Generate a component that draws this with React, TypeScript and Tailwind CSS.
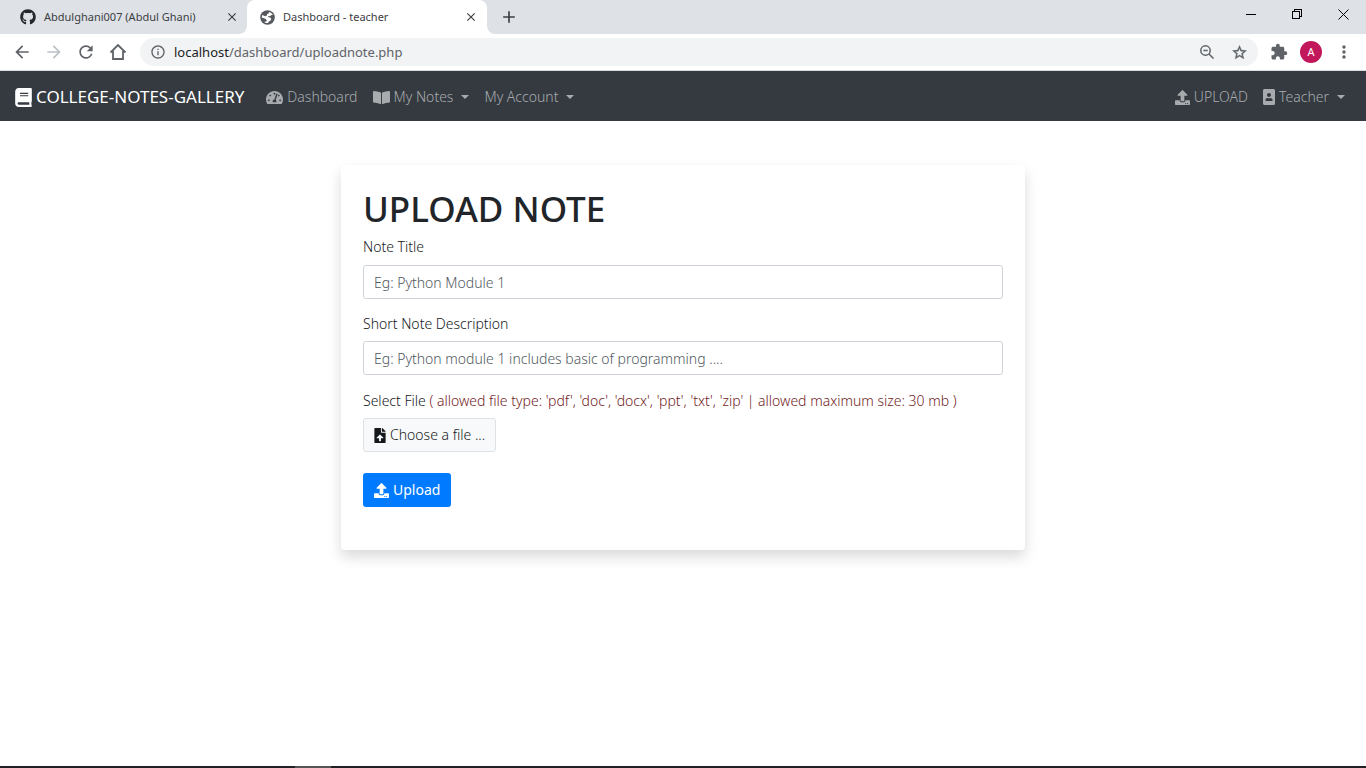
import React from "react";
import {
  FaBook,
  FaTachometerAlt,
  FaBookOpen,
  FaUpload,
  FaPortrait,
  FaFileUpload,
  FaGithub,
} from "react-icons/fa";
import {
  MdArrowBack,
  MdArrowForward,
  MdRefresh,
  MdInfoOutline,
  MdStarOutline,
  MdExtension,
  MdMoreVert,
  MdClose,
  MdAdd,
} from "react-icons/md";

function GlobeIcon() {
  return (
    <svg width="15" height="15" viewBox="0 0 15 15">
      <circle cx="7.500" cy="7.500" r="7.300" fill="#55595e" />
      <path
        d="M9 1.900c1.800.4 3.200 1.500 3.900 3l-1.500.1-1 1.100-2.200.1-.4.9 2.400.5 1.100 1.500-.9 1.600-1.600.7-.7 1.700c-1.500.1-2.900-.4-3.900-1.200l2-.4.7-1.200-1.600-1.600-3.500-1.300c0-.9.2-1.600.5-2.300l2.900 1.200 1.500-.6.300-1.500 1.600-.6z"
        fill="#fff"
      />
    </svg>
  );
}

function HomeIcon() {
  return (
    <svg width="20" height="20" viewBox="0 0 20 20" fill="none" stroke="currentColor" strokeWidth="1.800">
      <path d="M2.500 10.500L10 3l7.500 7.500M5 9v8h10V9" />
    </svg>
  );
}

function ZoomOutIcon() {
  return (
    <svg width="16" height="16" viewBox="0 0 16 16" fill="none" stroke="currentColor" strokeWidth="1.500">
      <circle cx="6.500" cy="6.500" r="4.700" />
      <path d="M4.300 6.500h4.400M10 10l4.500 4.500" />
    </svg>
  );
}

function WindowControls() {
  return (
    <div className="ml-auto flex h-7 items-center text-black">
      <button aria-label="Minimize" className="flex w-[46px] justify-center">
        <svg width="10" height="10" viewBox="0 0 10 10" shapeRendering="crispEdges">
          <path d="M0 5h10v1H0z" fill="currentColor" />
        </svg>
      </button>
      <button aria-label="Restore" className="flex w-[46px] justify-center">
        <svg width="10" height="10" viewBox="0 0 10 10" fill="none" stroke="currentColor" shapeRendering="crispEdges">
          <path d="M.5 2.500h7v7h-7zM2.500 2.500v-2h7v7h-2" />
        </svg>
      </button>
      <button aria-label="Close window" className="flex w-[46px] justify-center">
        <svg width="11" height="11" viewBox="0 0 11 11" fill="none" stroke="currentColor">
          <path d="M.5.5l10 10M10.500.5l-10 10" />
        </svg>
      </button>
    </div>
  );
}

function TabStrip() {
  return (
    <div className="flex h-[34px] bg-[#dee1e6] text-[11px] text-[#3c4043]">
      <div className="flex w-[247px] items-center pl-5 pr-2">
        <FaGithub size={16} color="#24292e" />
        <span className="ml-2 flex-1 whitespace-nowrap">Abdulghani007 (Abdul Ghani)</span>
        <button aria-label="Close tab">
          <MdClose size={14} />
        </button>
      </div>
      <div className="relative flex w-60 items-center rounded-t-lg bg-white pl-[13px] pr-[9px]">
        <svg className="absolute bottom-0 -left-2" width="8" height="8" fill="#fff">
          <path d="M8 0v8H0a8 8 0 0 0 8-8z" />
        </svg>
        <svg className="absolute bottom-0 -right-2" width="8" height="8" fill="#fff">
          <path d="M0 0v8h8a8 8 0 0 1-8-8z" />
        </svg>
        <GlobeIcon />
        <span className="ml-2 flex-1 whitespace-nowrap">Dashboard - teacher</span>
        <button aria-label="Close tab">
          <MdClose size={14} />
        </button>
      </div>
      <button aria-label="New tab" className="ml-3">
        <MdAdd size={20} />
      </button>
      <WindowControls />
    </div>
  );
}

function Toolbar() {
  return (
    <div className="flex h-[37px] items-center border-b border-[#dadce0] bg-white px-3 text-[#5f6368]">
      <div className="flex gap-3">
        <button aria-label="Back"><MdArrowBack size={20} /></button>
        <button aria-label="Forward" className="text-[#bdc1c6]"><MdArrowForward size={20} /></button>
        <button aria-label="Reload"><MdRefresh size={20} /></button>
        <button aria-label="Home"><HomeIcon /></button>
      </div>
      <div className="ml-3 flex h-7 flex-1 items-center rounded-full bg-[#f1f3f4] px-[10px]">
        <MdInfoOutline size={16} />
        <div className="ml-2 flex flex-1 items-center text-[13px] leading-5">
          <label htmlFor="address" className="text-[#202124]">localhost</label>
          <input
            id="address"
            defaultValue="/dashboard/uploadnote.php"
            className="h-5 flex-1 bg-transparent outline-none"
          />
        </div>
        <div className="flex gap-4">
          <button aria-label="Zoom"><ZoomOutIcon /></button>
          <button aria-label="Bookmark"><MdStarOutline size={17} stroke="currentColor" strokeWidth={0.5} /></button>
        </div>
      </div>
      <div className="ml-3 flex items-center gap-3">
        <button aria-label="Extensions"><MdExtension size={18} /></button>
        <button className="flex size-[22px] items-center justify-center rounded-full bg-[#c2185b] text-[11px] text-white">A</button>
        <button aria-label="Menu"><MdMoreVert size={20} /></button>
      </div>
    </div>
  );
}

function Caret() {
  return <span className="ml-1 border-x-4 border-t-4 border-x-transparent border-t-current" />;
}

function Navbar() {
  return (
    <nav className="flex h-[50px] items-center bg-[#343a40] px-[14px] pt-0.5 text-sm font-light text-[#a8abae]">
      <a href="#home" className="mr-[22px] flex items-center gap-[3px] whitespace-nowrap text-[17px] font-normal text-white">
        <FaBook size={19} />
        COLLEGE-NOTES-GALLERY
      </a>
      <a href="#dashboard" className="flex items-center gap-1">
        <FaTachometerAlt size={17} />
        Dashboard
      </a>
      <a href="#notes" className="ml-[15px] flex items-center gap-1 whitespace-nowrap">
        <FaBookOpen size={17} />
        My Notes
        <Caret />
      </a>
      <a href="#account" className="ml-[15px] flex items-center gap-1 whitespace-nowrap">
        My Account
        <Caret />
      </a>
      <a href="#upload" className="ml-auto flex items-center gap-1">
        <FaUpload size={15} />
        UPLOAD
      </a>
      <a href="#teacher" className="ml-[15px] mr-[7px] flex items-center gap-1">
        <FaPortrait size={16} className="w-3" />
        Teacher
        <Caret />
      </a>
    </nav>
  );
}

const inputClass =
  "block h-[34px] w-full rounded-[3px] border border-[#ced4da] bg-white px-[10px] text-sm placeholder:font-light placeholder:text-[#505960]";

function UploadForm() {
  return (
    <form
      onSubmit={(e) => e.preventDefault()}
      className="mx-auto mt-11 w-full max-w-[684px] rounded bg-white px-[22px] pt-[22px] pb-[43px] text-[#16191c] shadow-[0_7px_14px_rgba(0,0,0,0.15)]"
    >
      <h1 className="mb-1.5 text-[35px] leading-[44px] font-medium text-[#212529]">UPLOAD NOTE</h1>
      <label htmlFor="title" className="mb-2 block text-sm font-light">Note Title</label>
      <input id="title" placeholder="Eg: Python Module 1" className={inputClass} />
      <label htmlFor="description" className="mt-[15px] mb-[7px] block text-sm font-light">Short Note Description</label>
      <input id="description" placeholder="Eg: Python module 1 includes basic of programming ...." className={inputClass} />
      <label htmlFor="file" className="mt-4 mb-[7px] block text-sm font-light">
        Select File{" "}
        <span className="text-[#721c24]">
          ( allowed file type: 'pdf', 'doc', 'docx', 'ppt', 'txt', 'zip' | allowed maximum size: 30 mb )
        </span>
      </label>
      <button id="file" type="button" className="flex h-[34px] items-center gap-1 rounded-[3px] border border-[#dee2e6] bg-[#f8f9fa] px-[10px] text-sm font-light">
        <FaFileUpload size={15} className="w-3" />
        Choose a file ...
      </button>
      <button type="submit" className="mt-[21px] flex h-[34px] items-center gap-1 rounded-[3px] bg-[#007bff] px-[11px] text-sm text-white">
        <FaUpload size={15} />
        Upload
      </button>
    </form>
  );
}

export default function App() {
  return (
    <div className="flex min-h-screen flex-col bg-white font-['Noto_Sans',sans-serif]">
      <TabStrip />
      <Toolbar />
      <Navbar />
      <main className="flex-1">
        <UploadForm />
      </main>
      <footer className="flex h-0.5 bg-[#202124] pl-[295px]">
        <div className="w-9 bg-[#555]" />
      </footer>
    </div>
  );
}
